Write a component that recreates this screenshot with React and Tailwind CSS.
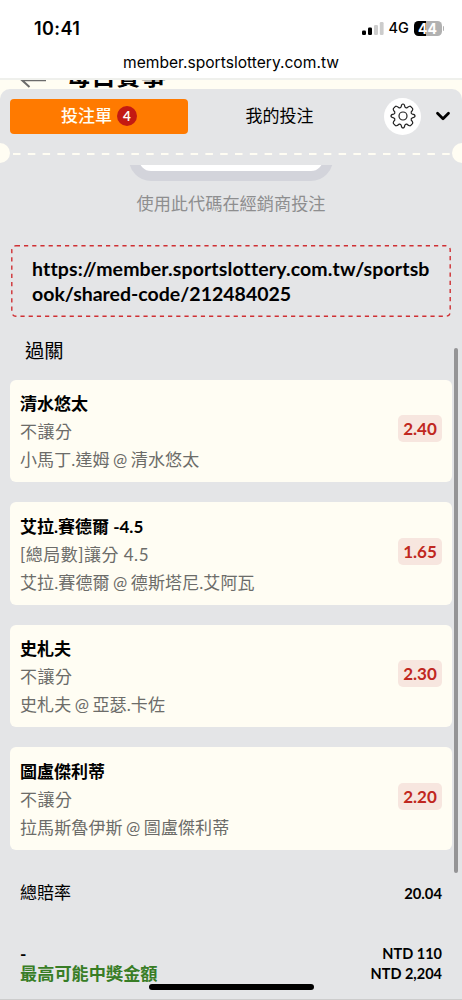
import { ChevronDown } from "lucide-react";

const BETS = [
  { pick: "清水悠太", market: "不讓分", match: "小馬丁.達姆 @ 清水悠太", odds: "2.40" },
  { pick: "艾拉.賽德爾 -4.5", market: "[總局數]讓分 4.5", match: "艾拉.賽德爾 @ 德斯塔尼.艾阿瓦", odds: "1.65" },
  { pick: "史札夫", market: "不讓分", match: "史札夫 @ 亞瑟.卡佐", odds: "2.30" },
  { pick: "圖盧傑利蒂", market: "不讓分", match: "拉馬斯魯伊斯 @ 圖盧傑利蒂", odds: "2.20" },
];

function StatusBar() {
  return (
    <div className="flex h-[52px] shrink-0 items-center justify-between pr-[18px] pl-[34px] pt-[5px] font-[Inter,sans-serif]">
      <span className="text-[18px] leading-none font-semibold tracking-[0.4px]">10:41</span>
      <div className="flex items-center">
        <svg width="22" height="13" viewBox="0 0 22 13">
          <rect x="0" y="8.5" width="4" height="4.5" rx="1.2" />
          <rect x="6" y="5.5" width="4" height="7.5" rx="1.2" />
          <rect x="12" y="3" width="4" height="10" rx="1.2" fill="#ccc" />
          <rect x="17.8" y="0" width="3.8" height="13" rx="1.2" fill="#ccc" />
        </svg>
        <span className="ml-[5px] w-[20px] text-[14.5px] leading-none font-medium">4G</span>
        <div className="ml-[5px] flex h-[15px] w-[28px] items-center justify-center rounded-[4.5px] bg-linear-to-r from-black from-44% to-[#b1b1b1] to-44% text-[14px] font-bold leading-none text-white">
          44
        </div>
        <div className="ml-px h-[5px] w-[1.5px] rounded-r-full bg-[#b1b1b1]" />
      </div>
    </div>
  );
}

function GearIcon() {
  return (
    <svg width="26" height="26" viewBox="0 0 26 26" fill="none" stroke="#222" strokeWidth="1.2" strokeLinejoin="round">
      <circle cx="13" cy="13" r="4" />
      <path d="M11.2 3.6Q11.5 1 13 1T14.8 3.6Q15.2 5.2 17 4.8Q20.2 1.8 21.5 4.5Q24.2 5.8 21.2 9Q20.8 10.8 22.4 11.2Q25 11.5 25 13T22.4 14.8Q20.8 15.2 21.2 17Q24.2 20.2 21.5 21.5Q20.2 24.2 17 21.2Q15.2 20.8 14.8 22.4Q14.5 25 13 25T11.2 22.4Q10.8 20.8 9 21.2Q5.8 24.2 4.5 21.5Q1.8 20.2 4.8 17Q5.2 15.2 3.6 14.8Q1 14.5 1 13T3.6 11.2Q5.2 10.8 4.8 9Q1.8 5.8 4.5 4.5Q5.8 1.8 9 4.8Q10.8 5.2 11.2 3.6Z" />
    </svg>
  );
}

function SlipHeader() {
  return (
    <div className="flex h-[54px] items-center pl-[10px]">
      <div className="flex h-[35px] w-[178px] items-center justify-center gap-[5px] rounded-[4px] bg-[#ff7a00] text-[17px] leading-[26px] font-medium text-[#fffdf3]">
        <span className="-mt-px">投注單</span>
        <span className="flex size-5 items-center justify-center rounded-full bg-[#c31a12] text-[13.5px] font-bold">4</span>
      </div>
      <div className="-mt-px w-[183px] text-center text-[17px]">我的投注</div>
      <div className="ml-[13px] flex size-[37px] items-center justify-center rounded-full bg-white">
        <GearIcon />
      </div>
      <ChevronDown className="ml-[11px]" size={22} strokeWidth={3} />
    </div>
  );
}

function Perforation() {
  return (
    <div className="flex h-5 shrink-0 items-center justify-between">
      <div className="h-5 w-[10px] rounded-r-full bg-[#fffdf3]" />
      <svg width="437" height="2" className="mt-[2px]">
        <line x1="0" y1="1" x2="437" y2="1" stroke="#fffdf3" strokeWidth="2" strokeDasharray="7.5 7.3" />
      </svg>
      <div className="h-5 w-[10px] rounded-l-full bg-[#fffdf3]" />
    </div>
  );
}

function BetCard({ bet }) {
  return (
    <div className="flex h-[102.5px] items-center justify-between rounded-[6px] bg-[#fffdf3] px-[10px]">
      <div className="pt-[3px] text-[17px] leading-[28px] text-[#6c6c69]">
        <p className="font-bold text-black">{bet.pick}</p>
        <p className="tracking-[0.5px]">{bet.market}</p>
        <p className="tracking-[0.1px] [word-spacing:-1px]">{bet.match}</p>
      </div>
      <span className="mt-[-4px] flex h-[27px] w-[44px] items-center justify-center rounded-[5px] bg-[#f7e6df] text-[17px] font-bold text-[#c02720]">
        {bet.odds}
      </span>
    </div>
  );
}

export default function App() {
  return (
    <div className="relative flex h-[1000px] w-[462px] flex-col overflow-hidden bg-white font-[Lato,'Noto_Sans_CJK_TC',sans-serif] text-black">
      <StatusBar />
      <div className="h-[26px] shrink-0 text-center font-[Inter,sans-serif] text-[15.6px] leading-[21px]">
        member.sportslottery.com.tw
      </div>

      {/* page title, scrolled under the address bar and the bet slip */}
      <div className="flex h-[11px] shrink-0 items-end gap-[20px] overflow-hidden border-t-2 border-[#eff0ec] bg-[#fffdf3] pl-[20px]">
        <svg width="26" height="9" viewBox="0 0 26 9" fill="none" stroke="#6b6b6b" strokeWidth="2">
          <path d="M26 0.2H2L9.5 7" />
        </svg>
        <span className="text-[25px] leading-[27px] font-bold">每日賽事</span>
      </div>

      <div className="shrink-0 bg-[#fffdf3]">
        <div className="rounded-t-[10px] bg-[#e4e5e7]">
          <SlipHeader />
        </div>
      </div>

      <div className="flex min-h-0 grow flex-col bg-[#e4e5e7]">
        <Perforation />
        <div className="mt-[2px] flex h-4 shrink-0 flex-col items-center justify-end overflow-hidden">
          <div className="h-[60px] w-[204px] shrink-0 rounded-[22px] border-[10px] border-[#d3d4db] bg-white" />
        </div>
        <p className="mt-[9px] text-center text-[17.2px] leading-[28px] text-[#8e8e8f]">使用此代碼在經銷商投注</p>

        <div className="relative mx-[11px] mt-[27px] h-[72px] shrink-0 pt-3 pl-[21px] text-[19.5px] leading-[24.5px] font-bold">
          <svg className="absolute inset-0" width="440" height="72" fill="none">
            <rect x="0.8" y="0.8" width="438.4" height="70.4" rx="4" stroke="#cf3034" strokeWidth="1.4" strokeDasharray="4.2 4" />
          </svg>
          <span className="tracking-[0.13px]">https://member.sportslottery.com.tw/sportsb</span>
          <br />
          ook/shared-code/212484025
        </div>

        <h2 className="mt-[19px] pl-[25px] text-[19.3px] leading-[30px]">過關</h2>

        <div className="mt-[13.5px] flex flex-col gap-[20px] pr-[10px] pl-[10px]">
          {BETS.map((bet) => (
            <BetCard key={bet.pick} bet={bet} />
          ))}
        </div>

        <div className="mt-[29.5px] flex items-center justify-between px-5 text-[17px] leading-[28px]">
          <span>總賠率</span>
          <span className="text-[14.8px] font-bold">20.04</span>
        </div>

        <div className="mt-[37px] flex items-start justify-between px-5 text-[17.2px] leading-5 font-bold">
          <div>
            <p>-</p>
            <p className="text-[#387d26]">最高可能中獎金額</p>
          </div>
          <div className="text-right text-[14.5px] leading-[19.5px]">
            <p>NTD 110</p>
            <p>NTD 2,204</p>
          </div>
        </div>
      </div>

      <div className="absolute top-[348px] right-1 h-[525px] w-[4px] rounded-full bg-[#949496]" />
      <div className="absolute bottom-[10px] left-[149px] h-[6px] w-[165px] rounded-full bg-black" />
      <div className="absolute bottom-0 left-0 h-px w-full bg-[#ccc]" />
    </div>
  );
}
